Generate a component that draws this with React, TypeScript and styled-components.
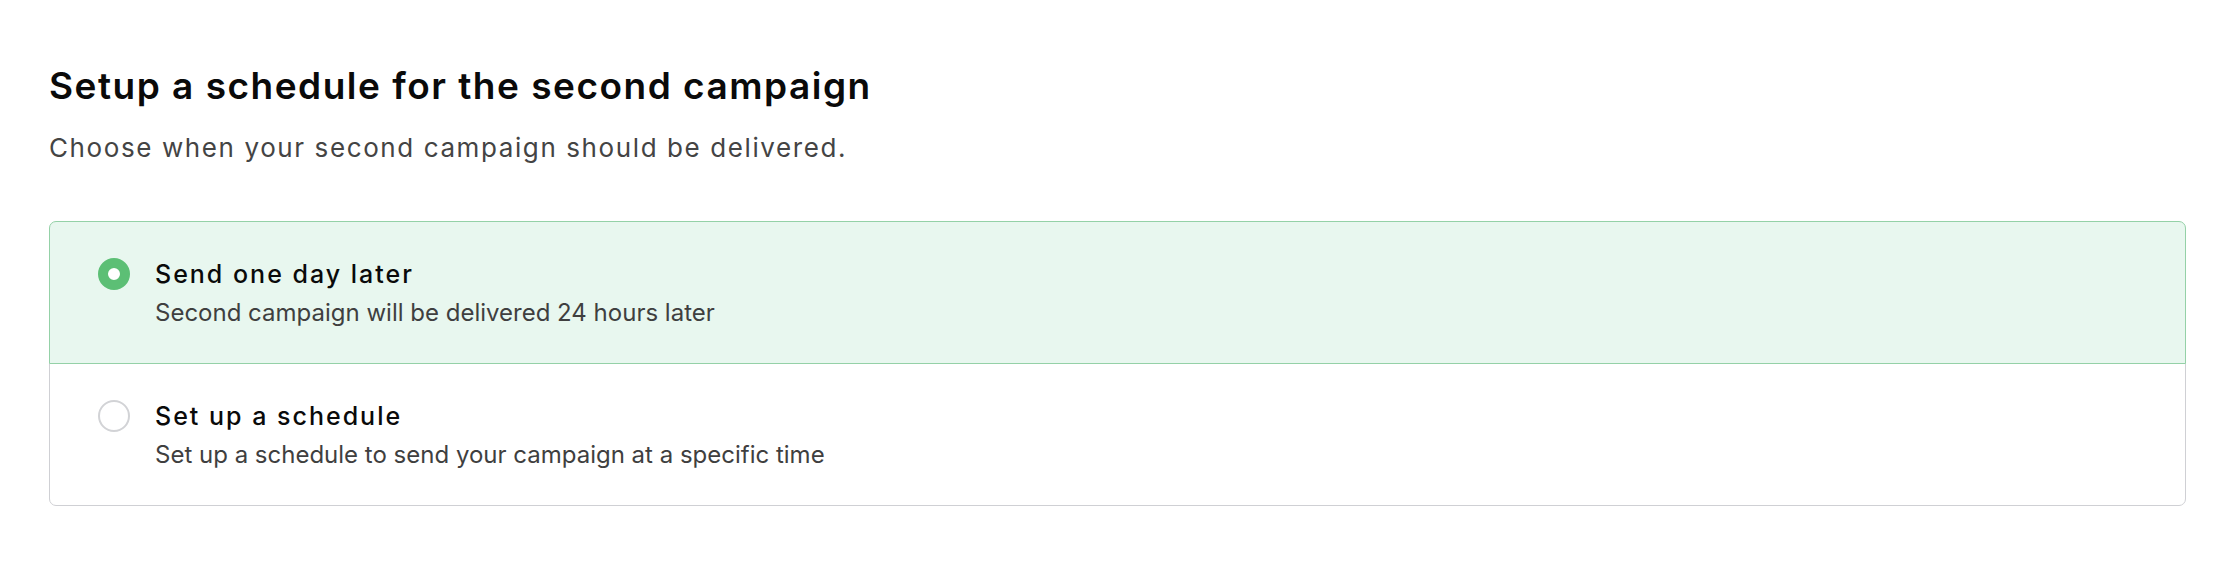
import React, { useState } from 'react';
import styled, { createGlobalStyle } from 'styled-components';

const GlobalStyle = createGlobalStyle`
  * { box-sizing: border-box; }
  body {
    margin: 0;
    background: #ffffff;
    font-family: Inter, 'Noto Sans', sans-serif;
    color: #0a0a0a;
  }
`;

const Page = styled.div`
  padding: 64px 52px 0 49px;
`;

const Title = styled.h1`
  margin: 0;
  font-size: 37px;
  line-height: 44px;
  font-weight: 600;
  letter-spacing: 1.5px;
  color: #0a0a0a;
`;

const Subtitle = styled.p`
  margin: 24px 0 0;
  font-size: 26px;
  line-height: 32px;
  font-weight: 400;
  letter-spacing: 1.6px;
  color: #444444;
`;

const Card = styled.div`
  margin-top: 57px;
  display: flex;
  flex-direction: column;
`;

const Option = styled.label<{ $active: boolean }>`
  position: relative;
  z-index: ${(p) => (p.$active ? 1 : 0)};
  display: flex;
  align-items: flex-start;
  gap: 25px;
  padding: 36px 48px 35px;
  background: ${(p) => (p.$active ? '#e8f7ef' : '#ffffff')};
  border: 1.5px solid ${(p) => (p.$active ? '#94d1a7' : '#cfd0d4')};
  cursor: pointer;
  &:first-child {
    border-radius: 7px 7px 0 0;
  }
  &:last-child {
    border-radius: 0 0 7px 7px;
  }
  & + & {
    margin-top: -1.5px;
  }
`;

const Radio = styled.span<{ $checked: boolean }>`
  flex: none;
  width: 32px;
  height: 32px;
  border-radius: 50%;
  background: #ffffff;
  border: ${(p) => (p.$checked ? '10px solid #5cbf75' : '2px solid #d2d3d6')};
`;

const Text = styled.div`
  display: flex;
  flex-direction: column;
  gap: 8px;
`;

const OptionTitle = styled.span`
  font-size: 25px;
  line-height: 32px;
  font-weight: 500;
  letter-spacing: 2px;
  color: #0a0a0a;
`;

const OptionDesc = styled.span`
  font-size: 24px;
  line-height: 30px;
  font-weight: 400;
  color: #3f3f3f;
`;

const options = [
  {
    id: 'later',
    title: 'Send one day later',
    desc: 'Second campaign will be delivered 24 hours later',
  },
  {
    id: 'schedule',
    title: 'Set up a schedule',
    desc: 'Set up a schedule to send your campaign at a specific time',
  },
];

export default function App() {
  const [selected, setSelected] = useState('later');
  return (
    <>
      <GlobalStyle />
      <Page>
        <Title>Setup a schedule for the second campaign</Title>
        <Subtitle>Choose when your second campaign should be delivered.</Subtitle>
        <Card>
          {options.map((o) => (
            <Option key={o.id} $active={selected === o.id} onClick={() => setSelected(o.id)}>
              <Radio $checked={selected === o.id} />
              <Text>
                <OptionTitle>{o.title}</OptionTitle>
                <OptionDesc>{o.desc}</OptionDesc>
              </Text>
            </Option>
          ))}
        </Card>
      </Page>
    </>
  );
}
